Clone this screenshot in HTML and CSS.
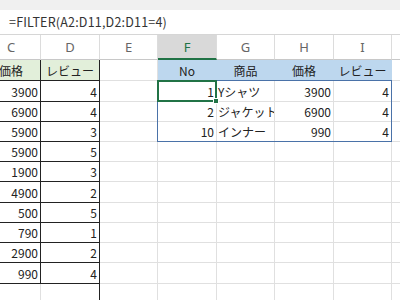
FILE: index.html
```html
<!DOCTYPE html>
<html lang="ja">
<head>
<meta charset="utf-8">
<link rel="stylesheet" href="styles.css">
</head>
<body>
<div class="topbar"></div>
<div class="fbar"><span class="formula">=FILTER(A2:D11,D2:D11=4)</span></div>
<div class="viewport">
<div class="sheet">
  <div class="c h">C</div><div class="c h">D</div><div class="c h">E</div><div class="c h sel">F</div><div class="c h">G</div><div class="c h">H</div><div class="c h">I</div><div class="c h"></div>

  <div class="c lt green ctr">価格</div><div class="c lt green ctr">レビュー</div><div class="c"></div><div class="c blue ctr">No</div><div class="c blue ctr">商品</div><div class="c blue ctr">価格</div><div class="c blue ctr">レビュー</div><div class="c"></div>

  <div class="c lt num">3900</div><div class="c lt num">4</div><div class="c"></div><div class="c num anchor">1<div class="spill"></div><div class="active"><span class="handle"></span></div></div><div class="c txt">Yシャツ</div><div class="c num">3900</div><div class="c num">4</div><div class="c"></div>

  <div class="c lt num">6900</div><div class="c lt num">4</div><div class="c"></div><div class="c num">2</div><div class="c txt">ジャケット</div><div class="c num">6900</div><div class="c num">4</div><div class="c"></div>

  <div class="c lt num">5900</div><div class="c lt num">3</div><div class="c"></div><div class="c num">10</div><div class="c txt">インナー</div><div class="c num">990</div><div class="c num">4</div><div class="c"></div>

  <div class="c lt num">5900</div><div class="c lt num">5</div><div class="c"></div><div class="c"></div><div class="c"></div><div class="c"></div><div class="c"></div><div class="c"></div>

  <div class="c lt num">1900</div><div class="c lt num">3</div><div class="c"></div><div class="c"></div><div class="c"></div><div class="c"></div><div class="c"></div><div class="c"></div>

  <div class="c lt num">4900</div><div class="c lt num">2</div><div class="c"></div><div class="c"></div><div class="c"></div><div class="c"></div><div class="c"></div><div class="c"></div>

  <div class="c lt num">500</div><div class="c lt num">5</div><div class="c"></div><div class="c"></div><div class="c"></div><div class="c"></div><div class="c"></div><div class="c"></div>

  <div class="c lt num">790</div><div class="c lt num">1</div><div class="c"></div><div class="c"></div><div class="c"></div><div class="c"></div><div class="c"></div><div class="c"></div>

  <div class="c lt num">2900</div><div class="c lt num">2</div><div class="c"></div><div class="c"></div><div class="c"></div><div class="c"></div><div class="c"></div><div class="c"></div>

  <div class="c lt num">990</div><div class="c lt num">4</div><div class="c"></div><div class="c"></div><div class="c"></div><div class="c"></div><div class="c"></div><div class="c"></div>

  <div class="c"></div><div class="c lcol"></div><div class="c"></div><div class="c"></div><div class="c"></div><div class="c"></div><div class="c"></div><div class="c"></div>
</div>
</div>
</body>
</html>
```
FILE: styles.css
```css
html {
  overflow: hidden;
}
html, body {
  margin: 0;
  padding: 0;
  background: #ffffff;
}
body {
  width: 400px;
  height: 300px;
  overflow: hidden;
  font-family: "Noto Sans CJK JP", "Noto Sans", sans-serif;
  color: #222;
}
.topbar {
  height: 10px;
  background: #f0f0f0;
}
.fbar {
  box-sizing: border-box;
  height: 25px;
  border-bottom: 1px solid #d6d6d6;
  display: flex;
  align-items: center;
  padding: 0 0 1px 9px;
  font-size: 12.5px;
  color: #333;
}
.formula {
  display: block;
  letter-spacing: 0.2px;
}
.viewport {
  width: 400px;
  overflow: hidden;
}
.sheet {
  display: grid;
  grid-template-columns: 59px 59px 58px 59px 58px 59px 58px 58px;
  grid-template-rows: 25px 21px 21px 20px 20px 20px 20px 21px 20px 20px 20px 21px 20px;
  margin-left: -18px;
}
.c {
  box-sizing: border-box;
  border-right: 1px solid #e0e0e0;
  border-bottom: 1px solid #e0e0e0;
  display: flex;
  align-items: center;
  padding: 0 2px;
  font-size: 12px;
  white-space: nowrap;
  overflow: hidden;
}
.h {
  justify-content: center;
  font-family: "Noto Sans", sans-serif;
  font-size: 13px;
  color: #666;
  border-right-color: #dcdcdc;
  border-bottom-color: #c8c8c8;
}
.sel {
  background: #d9d9d9;
  color: #217346;
  border-bottom: 2px solid #217346;
}
.ctr { justify-content: center; }
.num { justify-content: flex-end; }
.txt { justify-content: flex-start; padding-left: 1px; }
.lt {
  border-right-color: #222;
  border-bottom-color: #222;
}
.green { background: #e2efda; }
.blue {
  background: #bdd7ee;
  border-right-color: #bdd7ee;
  border-bottom-color: #bdd7ee;
}
.anchor {
  position: relative;
  overflow: visible;
  z-index: 2;
}
.spill {
  position: absolute;
  left: -1px;
  top: -1px;
  width: 235px;
  height: 62px;
  box-sizing: border-box;
  border: 1px solid #4a72a8;
  pointer-events: none;
}
.active {
  position: absolute;
  left: -1px;
  top: -1px;
  width: 60px;
  height: 22px;
  box-sizing: border-box;
  border: 2px solid #217346;
}
.handle {
  position: absolute;
  right: -4px;
  bottom: -4px;
  width: 4px;
  height: 4px;
  background: #217346;
  border: 1px solid #fff;
}
.lcol {
  border-right-color: #222;
  border-bottom-color: #e0e0e0;
}
```
